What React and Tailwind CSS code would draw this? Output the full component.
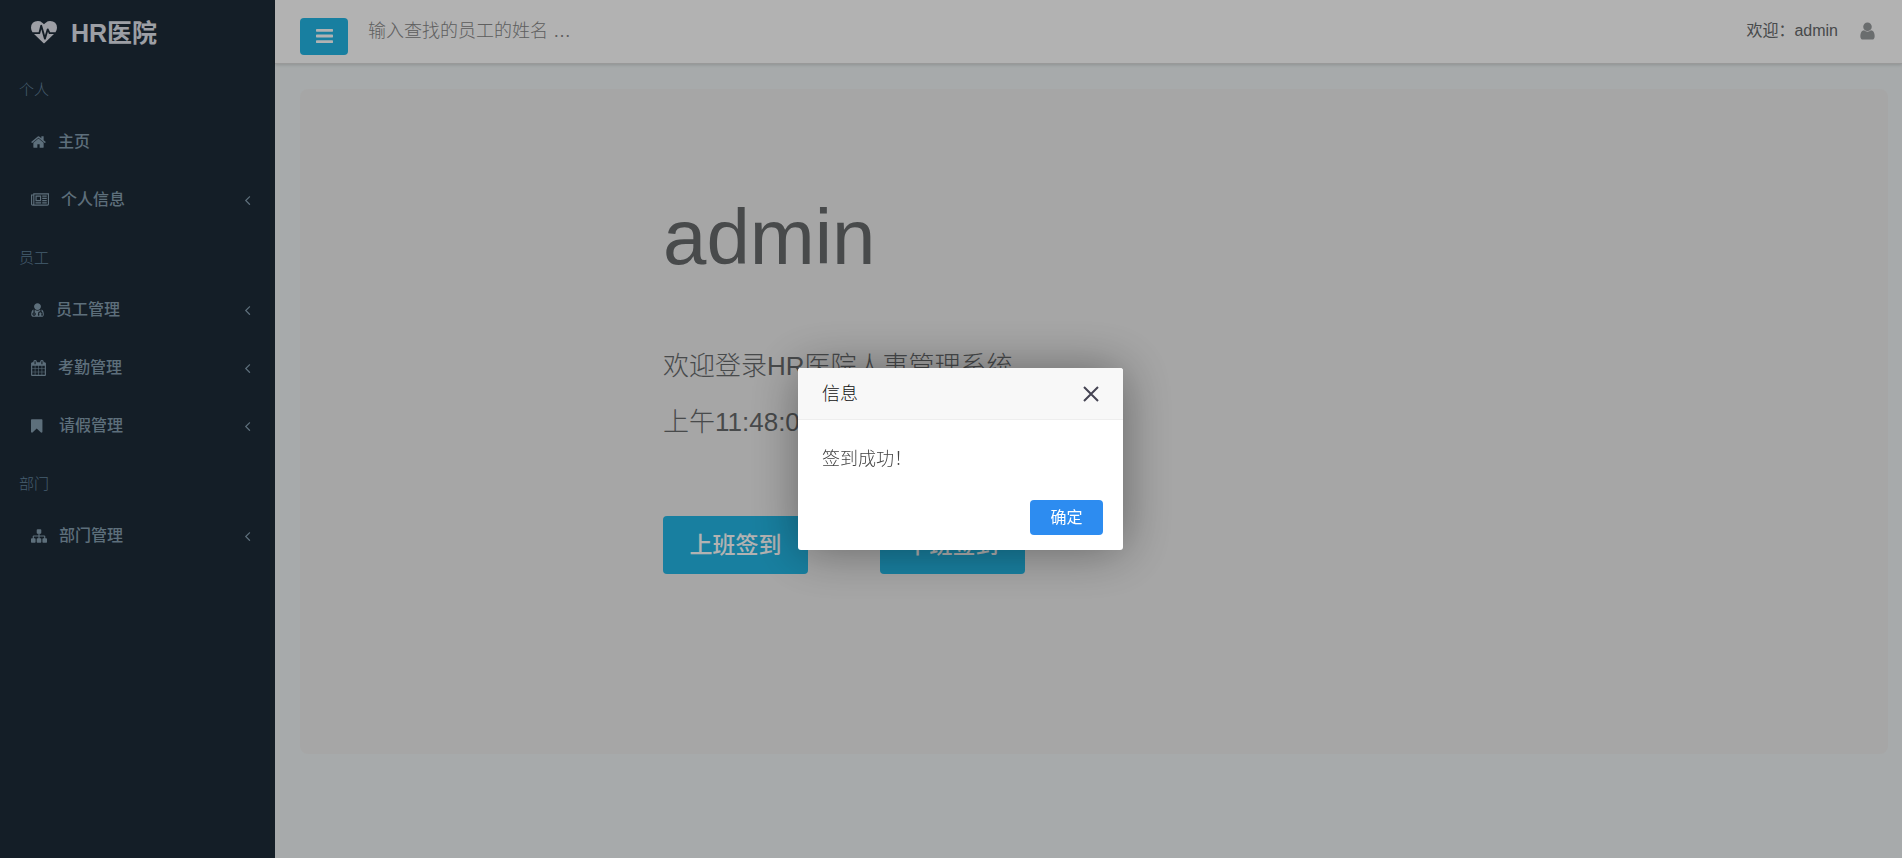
const icons = {
  heartbeat: {
    viewBox: '0 0 1792 1792',
    d: 'M1280 896h305q-5 6-10 10.5t-9 7.5l-3 4-623 600q-18 18-44 18t-44-18l-624-602q-5-2-21-20h369q22 0 39.5-13.5t22.5-34.5l70-281 190 667q6 20 23 33t39 13q21 0 38-13t23-33l146-485 56 112q18 35 57 35zm512-428q0 145-103 300h-369l-111-221q-8-17-25.5-27t-36.5-8q-45 5-56 46l-129 430-196-686q-6-20-23.5-33t-39.5-13-39 13.5-22 34.5l-116 464h-423q-103-155-103-300 0-220 127-344t351-124q62 0 126.5 21.5t120 58 95.5 68.5 76 68q36-36 76-68t95.5-68.5 120-58 126.5-21.5q224 0 351 124t127 344z',
  },
  home: {
    viewBox: '64 0 1664 1792',
    d: 'M1472 992v480q0 26-19 45t-45 19h-384v-384h-256v384h-384q-26 0-45-19t-19-45v-480q0-1 .5-3t.5-3l575-474 575 474q1 2 1 6zm223-69l-62 74q-8 9-21 11h-3q-13 0-21-7l-692-577-692 577q-12 8-24 7-13-2-21-11l-62-74q-8-10-7-23.5t11-21.5l719-599q32-26 76-26t76 26l244 204v-195q0-14 9-23t23-9h192q14 0 23 9t9 23v408l219 182q10 8 11 21.5t-7 23.5z',
  },
  newspaper: {
    viewBox: '0 -128 2048 1792',
    d: 'M1024 384h-384v384h384v-384zm128 640v128h-640v-128h640zm0-768v640h-640v-640h640zm640 768v128h-512v-128h512zm0-256v128h-512v-128h512zm0-256v128h-512v-128h512zm0-256v128h-512v-128h512zm-1536 960v-960h-128v960q0 26 19 45t45 19 45-19 19-45zm1664 0v-1088h-1536v1088q0 33-11 64h1483q26 0 45-19t19-45zm128-1216v1216q0 80-56 136t-136 56h-1664q-80 0-136-56t-56-136v-1088h256v-128h1792z',
  },
  userMd: {
    viewBox: '0 -128 1408 1792',
    flip: true,
    d: 'M384 192q0 -26 -19 -45t-45 -19t-45 19t-19 45t19 45t45 19t45 -19t19 -45zM1408 131q0 -121 -73 -190t-194 -69h-874q-121 0 -194 69t-73 190q0 68 5.5 131t24 138t47.5 132.5t81 103t120 60.5q-22 -52 -22 -120v-203q-58 -20 -93 -70t-35 -111q0 -80 56 -136t136 -56t136 56t56 136q0 61 -35.5 111t-92.5 70v203q0 62 25 93q132 -104 295 -104t295 104q25 -31 25 -93v-64q-106 0 -181 -75t-75 -181v-89q-32 -29 -32 -71q0 -40 28 -68t68 -28t68 28t28 68q0 42 -32 71v89q0 52 38 90t90 38t90 -38t38 -90v-89q-32 -29 -32 -71q0 -40 28 -68t68 -28t68 28t28 68q0 42 -32 71v89q0 68 -34.5 127.5t-93.5 93.5q0 10 0.5 42.5t0 48t-2.5 41.5t-7 47t-13 40q68 -15 120 -60.5t81 -103t47.5 -132.5t24 -138t5.5 -131zM1088 1024q0 -159 -112.5 -271.5t-271.5 -112.5t-271.5 112.5t-112.5 271.5t112.5 271.5t271.5 112.5t271.5 -112.5t112.5 -271.5z',
  },
  calendar: {
    viewBox: '64 0 1664 1792',
    d: 'M192 1664h288v-288h-288v288zm352 0h320v-288h-320v288zm-352-352h288v-320h-288v320zm352 0h320v-320h-320v320zm-352-384h288v-288h-288v288zm736 736h320v-288h-320v288zm-384-736h320v-288h-320v288zm768 736h288v-288h-288v288zm-384-352h320v-320h-320v320zm-352-864v-288q0-13-9.5-22.5t-22.5-9.5h-64q-13 0-22.5 9.5t-9.5 22.5v288q0 13 9.5 22.5t22.5 9.5h64q13 0 22.5-9.5t9.5-22.5zm736 864h288v-320h-288v320zm-384-384h320v-288h-320v288zm384 0h288v-288h-288v288zm32-480v-288q0-13-9.5-22.5t-22.5-9.5h-64q-13 0-22.5 9.5t-9.5 22.5v288q0 13 9.5 22.5t22.5 9.5h64q13 0 22.5-9.5t9.5-22.5zm384-64v1280q0 52-38 90t-90 38h-1408q-52 0-90-38t-38-90v-1280q0-52 38-90t90-38h128v-96q0-66 47-113t113-47h64q66 0 113 47t47 113v96h384v-96q0-66 47-113t113-47h64q66 0 113 47t47 113v96h128q52 0 90 38t38 90z',
  },
  bookmark: {
    viewBox: '256 0 1792 1792',
    d: 'M1420 128q23 0 44 9 33 13 52.5 41t19.5 62v1289q0 34-19.5 62t-52.5 41q-19 8-44 8-48 0-83-32l-441-424-441 424q-36 33-83 33-23 0-44-9-33-13-52.5-41t-19.5-62v-1289q0-34 19.5-62t52.5-41q21-9 44-9h1048z',
  },
  sitemap: {
    viewBox: '0 0 1792 1792',
    d: 'M1792 1248v320q0 40-28 68t-68 28h-320q-40 0-68-28t-28-68v-320q0-40 28-68t68-28h96v-192h-512v192h96q40 0 68 28t28 68v320q0 40-28 68t-68 28h-320q-40 0-68-28t-28-68v-320q0-40 28-68t68-28h96v-192h-512v192h96q40 0 68 28t28 68v320q0 40-28 68t-68 28h-320q-40 0-68-28t-28-68v-320q0-40 28-68t68-28h96v-192q0-52 38-90t90-38h512v-192h-96q-40 0-68-28t-28-68v-320q0-40 28-68t68-28h320q40 0 68 28t28 68v320q0 40-28 68t-68 28h-96v192h512q52 0 90 38t38 90v192h96q40 0 68 28t28 68z',
  },
  angleLeft: {
    viewBox: '544 0 704 1792',
    d: 'M1203 544q0 13-10 23l-393 393 393 393q10 10 10 23t-10 23l-50 50q-10 10-23 10t-23-10l-466-466q-10-10-10-23t10-23l466-466q10-10 23-10t23 10l50 50q10 10 10 23z',
  },
  bars: {
    viewBox: '128 0 1536 1792',
    d: 'M1664 1344v128q0 26-19 45t-45 19h-1408q-26 0-45-19t-19-45v-128q0-26 19-45t45-19h1408q26 0 45 19t19 45zm0-512v128q0 26-19 45t-45 19h-1408q-26 0-45-19t-19-45v-128q0-26 19-45t45-19h1408q26 0 45 19t19 45zm0-512v128q0 26-19 45t-45 19h-1408q-26 0-45-19t-19-45v-128q0-26 19-45t45-19h1408q26 0 45 19t19 45z',
  },
  user: {
    viewBox: '256 0 1280 1792',
    d: 'M1536 1399q0 109-62.5 187t-150.5 78h-854q-88 0-150.5-78t-62.5-187q0-85 8.5-160.5t31.5-152 58.5-131 94-89 134.5-34.5q131 128 313 128t313-128q76 0 134.5 34.5t94 89 58.5 131 31.5 152 8.5 160.5zm-256-887q0 159-112.5 271.5t-271.5 112.5-271.5-112.5-112.5-271.5 112.5-271.5 271.5-112.5 271.5 112.5 112.5 271.5z',
  },
}

const menu = [
  {
    title: '个人',
    items: [
      { label: '主页', icon: 'home', size: 'w-[15px] h-4' },
      { label: '个人信息', icon: 'newspaper', size: 'w-[18px] h-4', children: true },
    ],
  },
  {
    title: '员工',
    items: [
      { label: '员工管理', icon: 'userMd', size: 'w-[13px] h-4', children: true },
      { label: '考勤管理', icon: 'calendar', size: 'w-[15px] h-4', children: true },
      { label: '请假管理', icon: 'bookmark', size: 'w-4 h-4', children: true },
    ],
  },
  {
    title: '部门',
    items: [{ label: '部门管理', icon: 'sitemap', size: 'w-4 h-4', children: true }],
  },
]

function Icon({ name, className }) {
  const icon = icons[name]
  return (
    <svg viewBox={icon.viewBox} className={`shrink-0 fill-current ${className}`} aria-hidden="true">
      <path d={icon.d} transform={icon.flip ? 'translate(0 1408) scale(1 -1)' : undefined} />
    </svg>
  )
}

function Sidebar() {
  return (
    <nav className="w-[275px] shrink-0 bg-[#1e2c38]">
      <a href="#" className="flex items-center gap-[14px] h-[61px] pt-[6px] pl-[31px] text-[25px] font-bold text-[#e1e4ed]">
        <Icon name="heartbeat" className="w-[26px] h-[26px]" /> HR医院
      </a>
      {menu.map((group) => (
        <div key={group.title}>
          <h3 className="h-[52px] px-[19px] pt-[6px] leading-[46px] text-[15px] font-light text-[#6485a0]">{group.title}</h3>
          <ul>
            {group.items.map((item) => (
              <li key={item.label}>
                <a href="#" className="flex items-center gap-3 h-[58px] pl-[31px] pr-6 text-base font-medium text-[#869fb1]">
                  <Icon name={item.icon} className={item.size} />
                  <span className="flex-1">{item.label}</span>
                  {item.children && <Icon name="angleLeft" className="w-[7px] h-4" />}
                </a>
              </li>
            ))}
          </ul>
        </div>
      ))}
    </nav>
  )
}

function Header() {
  return (
    <header className="flex items-start h-16 pl-[25px] pr-[27px] bg-white border-b border-[#dcdcdc] shadow-[0_1px_3px_rgba(0,0,0,0.15)]">
      <button
        type="button"
        aria-label="菜单"
        className="flex items-center justify-center mt-[18px] pb-[2px] w-12 h-[37px] rounded bg-[#23b7e5] text-white"
      >
        <Icon name="bars" className="w-[17px] h-5" />
      </button>
      <input
        type="text"
        aria-label="输入查找的员工的姓名"
        placeholder="输入查找的员工的姓名 …"
        className="ml-5 w-[240px] h-[62px] bg-transparent text-lg font-light placeholder:text-[#888] outline-none"
      />
      <div className="ml-auto flex items-center gap-[22px] h-[62px]">
        <span>欢迎：admin</span>
        <a href="#" aria-label="用户" className="text-[#999c9e]">
          <Icon name="user" className="w-[15px] h-5" />
        </a>
      </div>
    </header>
  )
}

function Dialog() {
  return (
    <div className="fixed inset-0 flex items-center justify-center pl-[19px] pt-[60px] bg-black/30">
      <div
        role="dialog"
        aria-labelledby="dialog-title"
        className="w-[325px] rounded-[3px] bg-white shadow-[1px_1px_50px_rgba(0,0,0,0.4)]"
      >
        <div className="flex items-center justify-between h-[52px] px-6 rounded-t-[3px] bg-[#f8f8f8] border-b border-[#eee]">
          <h2 id="dialog-title" className="text-lg font-light text-[#111]">信息</h2>
          <button type="button" aria-label="关闭" className="text-[#454453]">
            <svg viewBox="0 0 16 16" className="w-4 h-4 fill-none stroke-current stroke-2">
              <path d="M1 1l14 14M15 1L1 15" />
            </svg>
          </button>
        </div>
        <p className="px-6 pt-[26px] leading-[27px] text-lg font-light text-[#444]">签到成功！</p>
        <div className="flex justify-end pt-[27px] pr-5 pb-[15px]">
          <button type="button" className="w-[73px] h-[35px] rounded-sm bg-[#2d8cf0] text-base text-white">
            确定
          </button>
        </div>
      </div>
    </div>
  )
}

export default function App() {
  return (
    <div className="flex min-h-screen bg-[#eff4f5] text-[#676a6c] font-['Liberation_Sans','Noto_Sans_CJK_SC',sans-serif]">
      <Sidebar />
      <div className="flex-1 min-w-0">
        <Header />
        <main className="pl-[25px] pr-[14px] pt-[25px]">
          <div className="min-h-[665px] rounded-lg bg-[#eee]">
            <div className="w-[862px] max-w-full mx-auto pt-[105px]">
              <h1 className="text-[78px] leading-[86px] font-medium">admin</h1>
              <div className="mt-[58px] text-[26px] leading-[56px] font-light">
                <p>欢迎登录HR医院人事管理系统</p>
                <p>上午11:48:05</p>
              </div>
              <div className="flex gap-[72px] mt-[66px]">
                <button type="button" className="w-[145px] h-[58px] rounded bg-[#23b7e5] text-[23px] font-medium text-white">
                  上班签到
                </button>
                <button type="button" className="w-[145px] h-[58px] rounded bg-[#23b7e5] text-[23px] font-medium text-white">
                  下班签到
                </button>
              </div>
            </div>
          </div>
        </main>
      </div>
      <Dialog />
    </div>
  )
}
